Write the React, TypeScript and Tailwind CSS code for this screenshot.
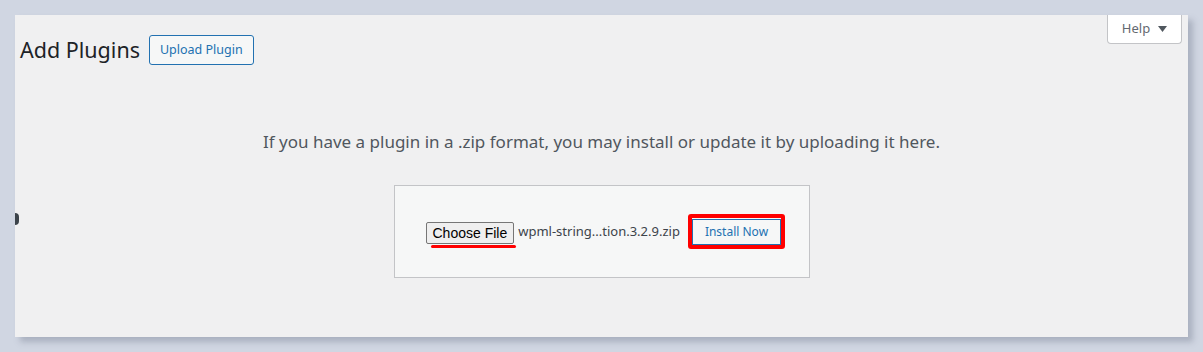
export default function App() {
  return (
    <div className="h-[352px] w-[1203px] overflow-hidden bg-[#d0d6e2] pt-[15px] pl-[15px] font-['Noto_Sans',sans-serif]">
      <div className="relative h-[322px] w-[1173px] bg-[#f0f0f1] shadow-[5px_5px_6px_rgba(100,110,130,0.35)]">
        <span className="absolute left-0 top-[198px] h-[12px] w-[4px] rounded-r-full bg-[#3c434a]" />
        <div className="flex justify-end pr-[6px]">
          <button className="flex h-[29px] w-[75px] items-center justify-center gap-[8px] rounded-b-[4px] border border-t-0 border-[#c3c4c7] bg-white text-[13px] text-[#646970]">
            Help
            <svg width="9" height="6" viewBox="0 0 9 6"><path d="M0 0h9L4.5 6z" fill="#50575e" /></svg>
          </button>
        </div>
        <div className="-mt-[9px] flex items-center gap-[9px] pl-[5px]">
          <h1 className="text-[21.5px] leading-[30px] text-[#1d2327]">Add Plugins</h1>
          <button className="h-[30px] rounded-[3px] border border-[#2271b1] bg-[#f6f7f7] px-[10px] text-[12.5px] text-[#2271b1]">
            Upload Plugin
          </button>
        </div>
        <p className="mt-[64px] text-center text-[17px] leading-[26px] text-[#50575e]">
          If you have a plugin in a .zip format, you may install or update it by uploading it here.
        </p>
        <div className="mx-auto mt-[30px] flex h-[93px] w-[416px] items-center border border-[#c3c4c7] bg-[#f6f7f7] pl-[31px]">
          <div className="relative">
            <button className="h-[22px] rounded-[2px] border border-[#767676] bg-[#efefef] px-[6px] font-['Liberation_Sans',sans-serif] text-[14px] leading-[20px] text-black">
              Choose File
            </button>
            <span className="absolute left-[5px] top-[25px] h-[3px] w-[85px] rounded-full bg-[#f00]" />
          </div>
          <span className="ml-[4px] text-[13px] text-[#3c434a]">wpml-string...tion.3.2.9.zip</span>
          <div className="ml-[8px] rounded-[3px] border-[4px] border-[#f00] p-0">
            <button className="h-[26px] border border-[#2271b1] bg-[#f6f7f7] px-[12px] text-[12px] text-[#2271b1]">
              Install Now
            </button>
          </div>
        </div>
      </div>
    </div>
  );
}
